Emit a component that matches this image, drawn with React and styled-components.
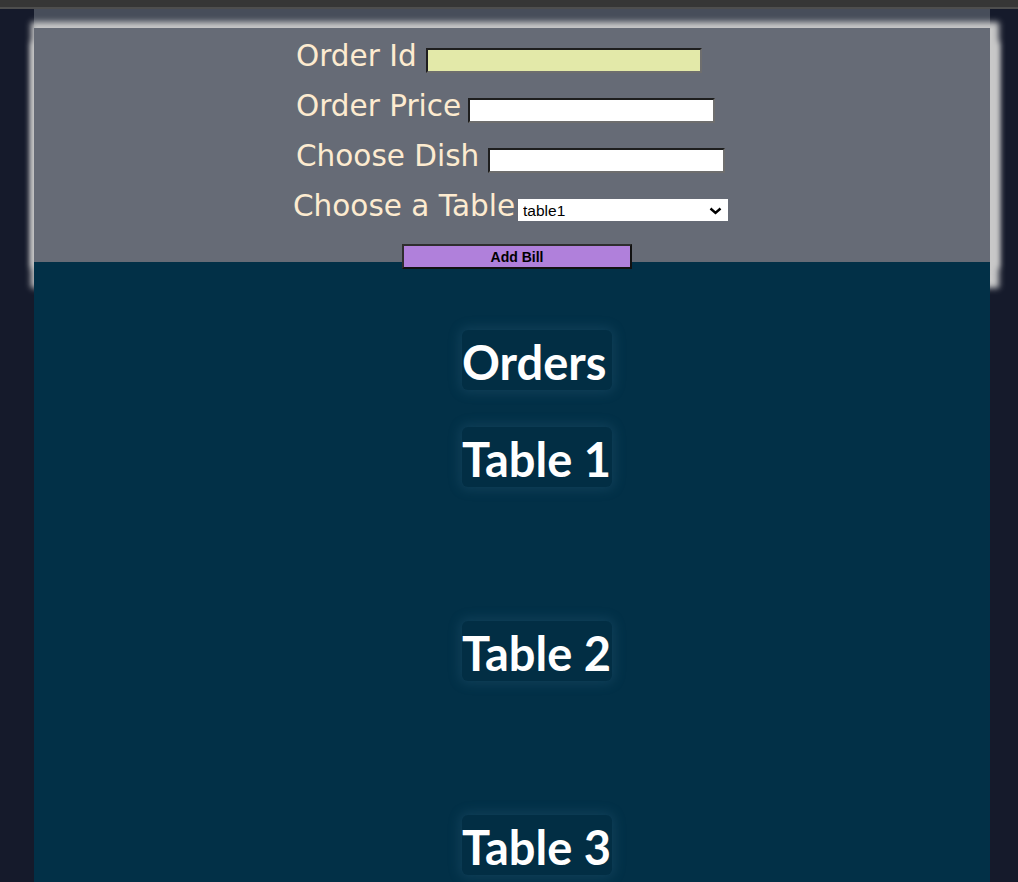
import React from 'react';
import styled, { createGlobalStyle } from 'styled-components';

const GlobalStyle = createGlobalStyle`
  html, body {
    margin: 0;
    padding: 0;
    background-color: #151a2b;
  }
`

const TopStrip = styled.div`
  height: 7px;
  background-color: #363636;
  border-bottom: 2px solid #4e4e4e;
`

const Container = styled.div`
  margin-left: 34px;
  width: 956px;
`

const TopBand = styled.div`
  height: 19px;
  background-color: #474d5a;
`

/* Form */

const FormBox = styled.form`
  height: 234px;
  background-color: #666b76;
  box-shadow: 3px 0 6px 6px #c8c8c8, 3px 20px 6px 6px #c8c8c8;
  padding-top: 11px;
  box-sizing: border-box;
`

const FormBody = styled.div`
  margin-left: 258px;
`

const Row = styled.div`
  display: flex;
  align-items: flex-start;
  height: 50px;
  padding-left: ${p => p.$indent || 0}px;
`

const Label = styled.label`
  font-family: "DejaVu Sans", Verdana, sans-serif;
  font-size: 29.5px;
  line-height: 34px;
  color: #fdebd0;
  white-space: nowrap;
`

const TextInput = styled.input`
  margin: 9px 0 0 ${p => p.$gap || 9}px;
  width: ${p => p.$width}px;
  height: 25px;
  box-sizing: border-box;
  border-width: 2px;
  border-style: solid;
  border-color: #1e1e1e #6e6e6e #6e6e6e #1e1e1e;
  background-color: ${p => p.$bg || '#fff'};
  padding: 0 3px;
  font-family: "Liberation Sans", Arial, sans-serif;
  font-size: 13px;
`

const SelectWrap = styled.span`
  position: relative;
  display: inline-block;
  margin: 10px 0 0 3px;
  width: 210px;
  height: 22px;
`

const Select = styled.select`
  appearance: none;
  width: 100%;
  height: 100%;
  border: none;
  background-color: #fff;
  padding: 0 0 0 5px;
  font-family: "Liberation Sans", Arial, sans-serif;
  font-size: 15.5px;
  color: #000;
  outline: none;
`

const Chevron = styled.svg`
  position: absolute;
  right: 6px;
  top: 8px;
  pointer-events: none;
`

const AddButton = styled.button`
  margin: 5px 0 0 110px;
  width: 230px;
  height: 25px;
  box-sizing: border-box;
  background-color: #b080db;
  border-width: 2px;
  border-style: solid;
  border-color: #2e2e2e #111 #111 #2e2e2e;
  font-family: "Liberation Sans", Arial, sans-serif;
  font-weight: 700;
  font-size: 14px;
  color: #000;
  padding: 0;
  cursor: pointer;
`

/* Orders */

const OrdersSection = styled.section`
  min-height: 552px;
  background-color: #023047;
  padding-top: 68px;
`

const Heading = styled.h1`
  margin: 0 0 37px 428px;
  width: 150px;
  height: 60px;
  box-sizing: border-box;
  padding: 4px 0 0;
  line-height: 56px;
  font-family: Lato, "Open Sans", sans-serif;
  font-weight: 700;
  font-size: 47px;
  color: #fff;
  white-space: nowrap;
  background-color: #022e44;
  border-radius: 6px;
  box-shadow: 0 0 12px 3px rgba(70, 120, 150, 0.22);
`

const TableGroup = styled.div``

const OrderList = styled.ul`
  margin: -37px 0 37px;
  padding: 0;
  height: 97px;
  list-style: none;
`

const tables = ['Table 1', 'Table 2', 'Table 3']

export default function App() {
  return (
    <>
      <GlobalStyle />
      <TopStrip />
      <Container>
        <TopBand />
        <FormBox onSubmit={(e) => e.preventDefault()}>
          <FormBody>
            <Row $indent={4}>
              <Label>Order Id</Label>
              <TextInput $width={276} $bg="#e3e9a9" />
            </Row>
            <Row $indent={4}>
              <Label>Order Price</Label>
              <TextInput $width={247} $gap={7} />
            </Row>
            <Row $indent={4}>
              <Label>Choose Dish</Label>
              <TextInput $width={237} />
            </Row>
            <Row $indent={1}>
              <Label>Choose a Table</Label>
              <SelectWrap>
                <Select defaultValue="table1">
                  <option value="table1">table1</option>
                  <option value="table2">table2</option>
                  <option value="table3">table3</option>
                </Select>
                <Chevron width="13" height="8" viewBox="0 0 13 8">
                  <path d="M1.5 1.5 L6.5 6 L11.5 1.5" fill="none" stroke="#000" strokeWidth="2.4" />
                </Chevron>
              </SelectWrap>
            </Row>
            <AddButton type="submit">Add Bill</AddButton>
          </FormBody>
        </FormBox>
        <OrdersSection>
          <Heading>Orders</Heading>
          {tables.map(t => (
            <TableGroup key={t}>
              <Heading>{t}</Heading>
              <OrderList />
            </TableGroup>
          ))}
        </OrdersSection>
      </Container>
    </>
  )
}
